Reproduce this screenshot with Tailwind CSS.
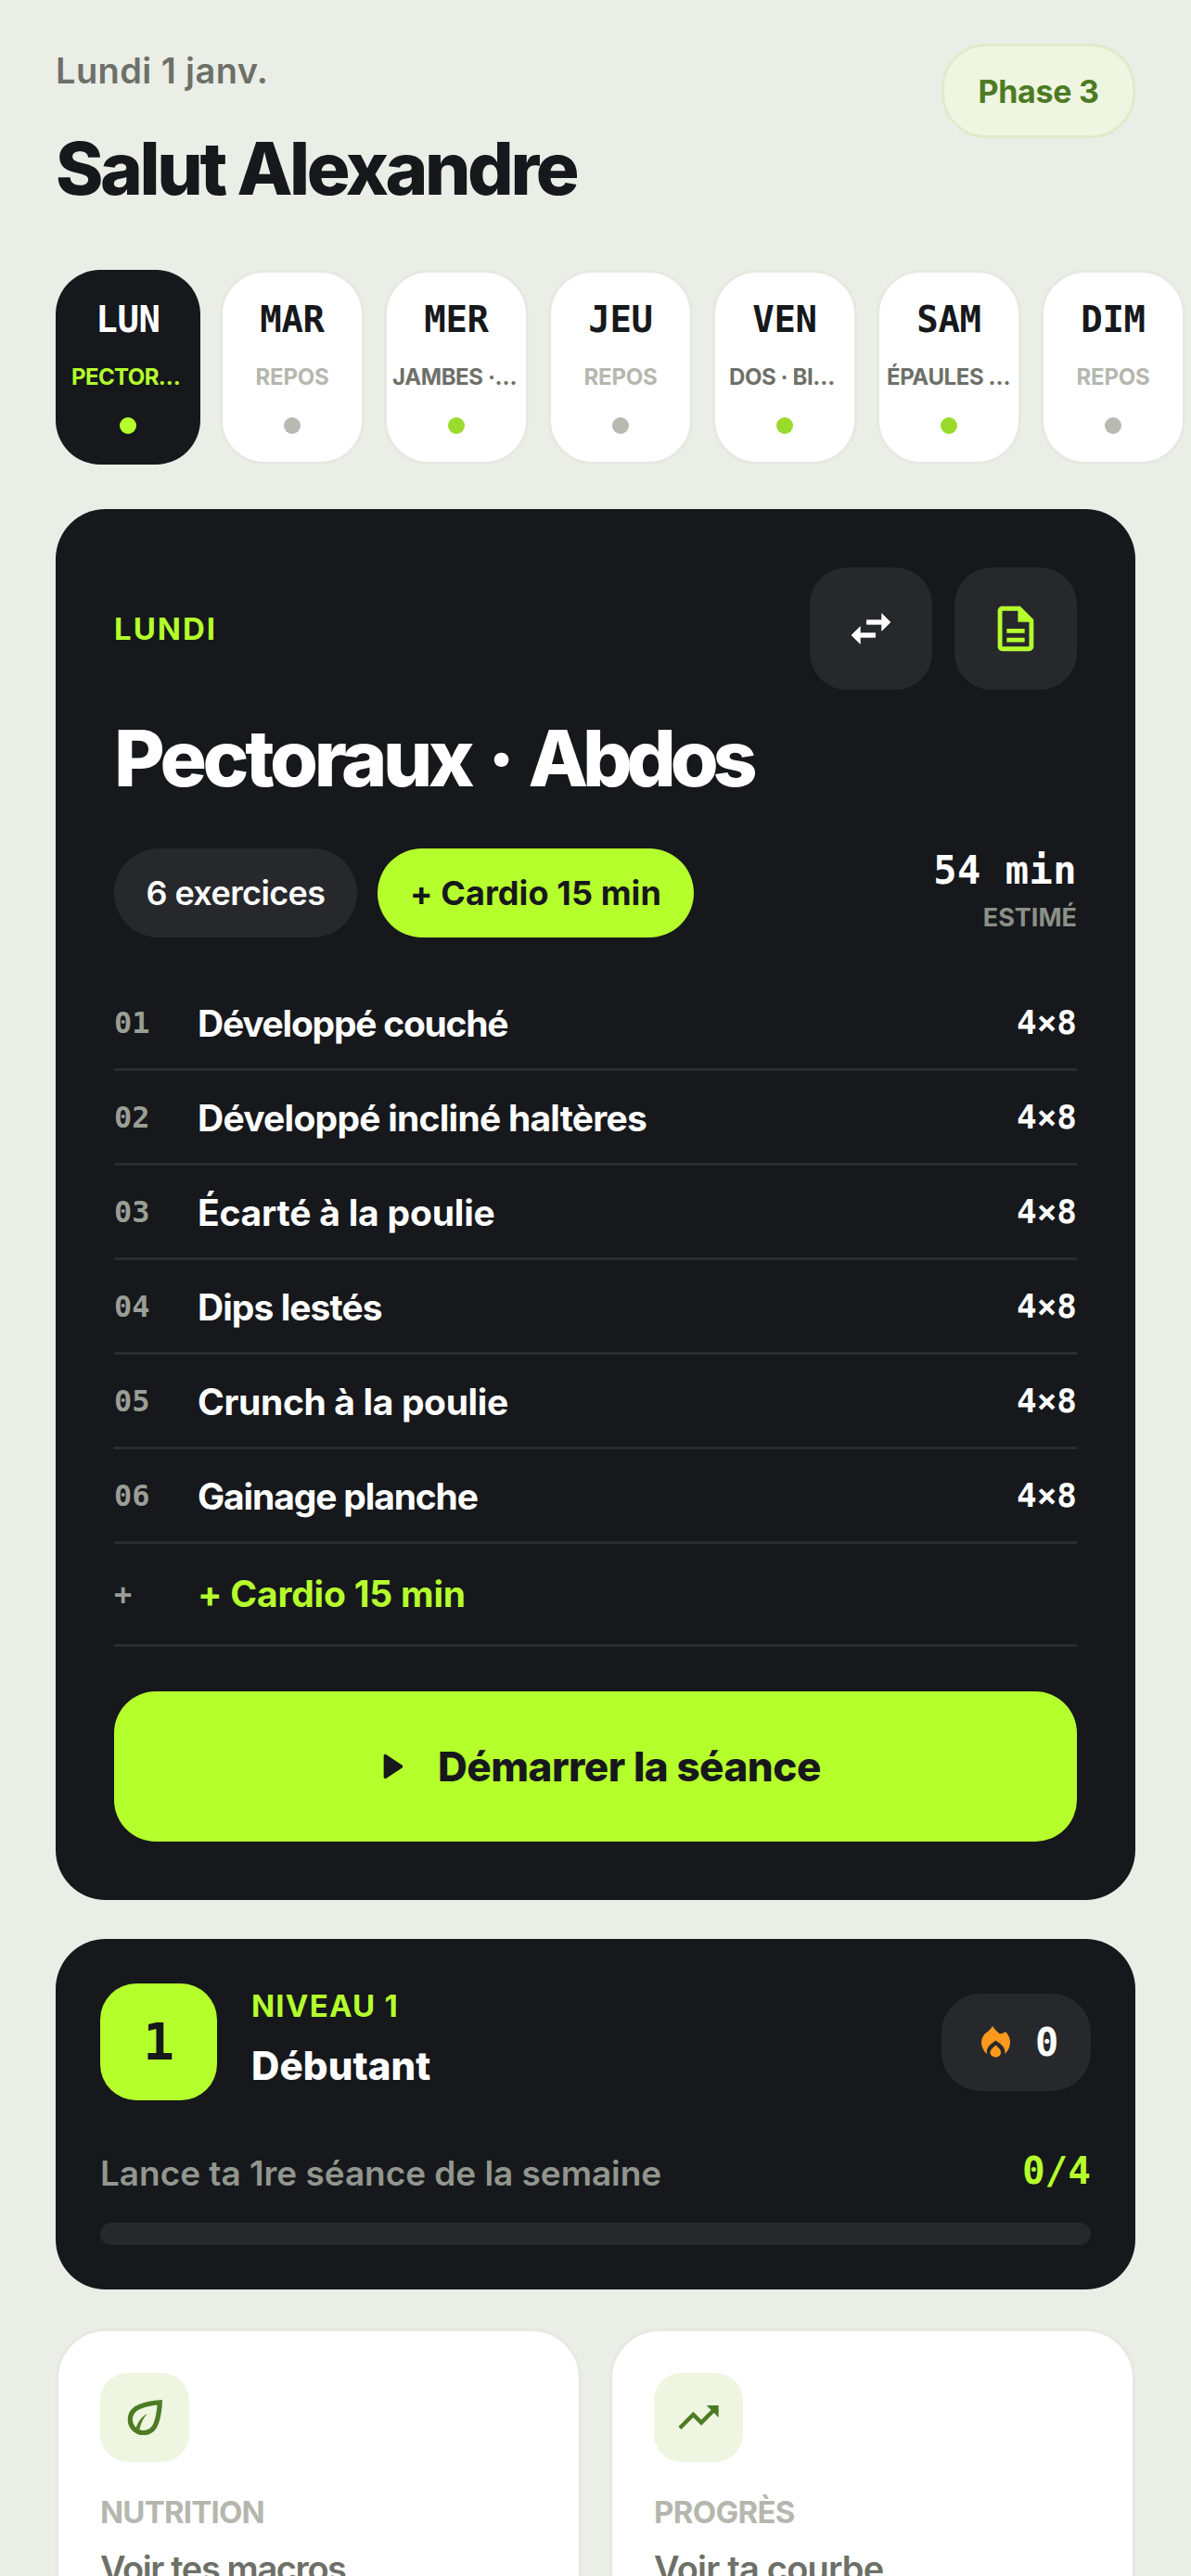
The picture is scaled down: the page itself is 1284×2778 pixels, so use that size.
<!doctype html>
<html lang="fr"><head><meta charset="utf-8"><script src="https://cdn.jsdelivr.net/npm/@tailwindcss/browser@4"></script></head>
<body class="m-0 w-[1284px] h-[2778px] overflow-hidden bg-[#ebeee7] font-['Inter',sans-serif] text-[#16181c]">
<div class="pt-[47px]">
<header class="flex justify-between px-[60px] h-[244px]">
<div>
<p class="mt-[2px] text-[38px] leading-[54px] font-semibold text-[#6d7068] tracking-[0.4px]">Lundi 1 janv.</p>
<h1 class="mt-[34px] text-[78px] leading-[90px] font-extrabold tracking-[-3.4px]">Salut Alexandre</h1>
</div>
<div class="w-[209px] h-[102px] flex items-center justify-center rounded-[48px] border-[3px] border-[#dfebcb] bg-[#eef5e0] text-[34px] font-bold tracking-[-0.3px] text-[#4c7b24]">Phase 3</div>
</header>
<div class="flex gap-[21px] pl-[60px] h-[210px] overflow-hidden">
<div class="shrink-0 w-[156px] h-[210px] rounded-[48px] bg-[#16181c] flex flex-col items-center text-white">
<span class="mt-[30px] font-['DejaVu_Sans_Mono',monospace] font-bold text-[39px] leading-[48px] tracking-[-0.3px]">LUN</span>
<span class="mt-[23px] w-[122px] text-center truncate text-[24px] leading-[30px] font-bold tracking-[-0.6px] text-[#b4ff2c]">PECTORAUX</span>
<span class="mt-[28px] w-[18px] h-[18px] rounded-full bg-[#b4ff2c]"></span>
</div>
<div class="shrink-0 w-[156px] h-[210px] rounded-[48px] bg-white border-[3px] border-[#e6e8e2] flex flex-col items-center">
<span class="mt-[27px] font-['DejaVu_Sans_Mono',monospace] font-bold text-[39px] leading-[48px] tracking-[-0.3px]">MAR</span>
<span class="mt-[23px] w-[136px] text-center truncate text-[24px] leading-[30px] font-bold tracking-[-0.2px] text-[#b5b7af]">REPOS</span>
<span class="mt-[28px] w-[18px] h-[18px] rounded-full bg-[#b8bab2]"></span>
</div>
<div class="shrink-0 w-[156px] h-[210px] rounded-[48px] bg-white border-[3px] border-[#e6e8e2] flex flex-col items-center">
<span class="mt-[27px] font-['DejaVu_Sans_Mono',monospace] font-bold text-[39px] leading-[48px] tracking-[-0.3px]">MER</span>
<span class="mt-[23px] w-[138px] text-center truncate text-[24px] leading-[30px] font-bold tracking-[-0.4px] text-[#6d7068]">JAMBES · MOLLETS</span>
<span class="mt-[28px] w-[18px] h-[18px] rounded-full bg-[#9ada2c]"></span>
</div>
<div class="shrink-0 w-[156px] h-[210px] rounded-[48px] bg-white border-[3px] border-[#e6e8e2] flex flex-col items-center">
<span class="mt-[27px] font-['DejaVu_Sans_Mono',monospace] font-bold text-[39px] leading-[48px] tracking-[-0.3px]">JEU</span>
<span class="mt-[23px] w-[136px] text-center truncate text-[24px] leading-[30px] font-bold tracking-[-0.2px] text-[#b5b7af]">REPOS</span>
<span class="mt-[28px] w-[18px] h-[18px] rounded-full bg-[#b8bab2]"></span>
</div>
<div class="shrink-0 w-[156px] h-[210px] rounded-[48px] bg-white border-[3px] border-[#e6e8e2] flex flex-col items-center">
<span class="mt-[27px] font-['DejaVu_Sans_Mono',monospace] font-bold text-[39px] leading-[48px] tracking-[-0.3px]">VEN</span>
<span class="mt-[23px] w-[120px] text-center truncate text-[24px] leading-[30px] font-bold tracking-[-0.4px] text-[#6d7068]">DOS · BICEPS</span>
<span class="mt-[28px] w-[18px] h-[18px] rounded-full bg-[#9ada2c]"></span>
</div>
<div class="shrink-0 w-[156px] h-[210px] rounded-[48px] bg-white border-[3px] border-[#e6e8e2] flex flex-col items-center">
<span class="mt-[27px] font-['DejaVu_Sans_Mono',monospace] font-bold text-[39px] leading-[48px] tracking-[-0.3px]">SAM</span>
<span class="mt-[23px] w-[134px] text-center truncate text-[24px] leading-[30px] font-bold tracking-[-0.4px] text-[#6d7068]">ÉPAULES · BRAS</span>
<span class="mt-[28px] w-[18px] h-[18px] rounded-full bg-[#9ada2c]"></span>
</div>
<div class="shrink-0 w-[156px] h-[210px] rounded-[48px] bg-white border-[3px] border-[#e6e8e2] flex flex-col items-center">
<span class="mt-[27px] font-['DejaVu_Sans_Mono',monospace] font-bold text-[39px] leading-[48px] tracking-[-0.3px]">DIM</span>
<span class="mt-[23px] w-[136px] text-center truncate text-[24px] leading-[30px] font-bold tracking-[-0.2px] text-[#b5b7af]">REPOS</span>
<span class="mt-[28px] w-[18px] h-[18px] rounded-full bg-[#b8bab2]"></span>
</div>
</div>

<main class="mx-[60px] mt-[48px] rounded-[54px] bg-[#16181c] px-[63px] pt-[63px] pb-[63px] text-white">
<div class="flex justify-between items-center">
<span class="text-[33px] font-bold tracking-[2px] text-[#b4ff2c] leading-[40px]">LUNDI</span>
<div class="flex gap-[24px]">
<div class="w-[132px] h-[132px] rounded-[40px] bg-[#27282c] flex items-center justify-center">
<svg width="56" height="56" viewBox="0 0 24 24" fill="#fff" stroke="#fff" stroke-width="0.3" stroke-linejoin="round"><path d="M6.99 11L3 15l3.99 4v-3H14v-2H6.99v-3zM21 9l-4-4v3h-7v2h7v3l4-4z"/></svg>
</div>
<div class="w-[132px] h-[132px] rounded-[40px] bg-[#27282c] flex items-center justify-center">
<svg width="58" height="58" viewBox="0 0 24 24" fill="#b5ff2d"><path d="M8 16h8v2H8zm0-4h8v2H8zm6-10H6c-1.1 0-2 .9-2 2v16c0 1.1.89 2 1.99 2H18c1.1 0 2-.9 2-2V8l-6-6zm4 18H6V4h7v5h5v11z"/></svg>
</div>
</div>
</div>
<h2 class="mt-[24px] text-[84px] leading-[100px] font-extrabold tracking-[-4.4px] [word-spacing:4.5px]">Pectoraux · <span class="tracking-[-6.2px]">Abdos</span></h2>
<div class="mt-[47px] flex items-start">
<span class="w-[262px] h-[96px] rounded-full bg-[#27282c] flex items-center justify-center text-[36px] font-semibold tracking-[-0.6px]">6 exercices</span>
<span class="ml-[22px] w-[341px] h-[96px] rounded-full bg-[#b5ff2d] text-[#16181c] flex items-center justify-center text-[36px] font-bold tracking-[0.1px]">+ Cardio 15 min</span>
<div class="ml-auto flex flex-col items-end">
<span class="font-['DejaVu_Sans_Mono',monospace] font-bold text-[42px] leading-[48px] tracking-[0.5px]">54 min</span>
<span class="mt-[9px] text-[27px] leading-[36px] font-bold text-[#8c9088]">ESTIMÉ</span>
</div>
</div>
<ul class="mt-[42px]">
<li class="h-[102px] border-b-[3px] border-[#2b2c31] flex items-center"><span class="mt-[1px] w-[90px] font-['DejaVu_Sans_Mono',monospace] font-bold text-[32px] text-[#9a9e96]">01</span><span class="mt-[3px] text-[39px] font-bold tracking-[-1.25px]">Développé couché</span><span class="ml-auto mt-[1px] font-['DejaVu_Sans_Mono',monospace] font-bold text-[36px]">4×8</span></li>
<li class="h-[102px] border-b-[3px] border-[#2b2c31] flex items-center"><span class="mt-[1px] w-[90px] font-['DejaVu_Sans_Mono',monospace] font-bold text-[32px] text-[#9a9e96]">02</span><span class="mt-[3px] text-[39px] font-bold tracking-[-0.75px]">Développé incliné haltères</span><span class="ml-auto mt-[1px] font-['DejaVu_Sans_Mono',monospace] font-bold text-[36px]">4×8</span></li>
<li class="h-[102px] border-b-[3px] border-[#2b2c31] flex items-center"><span class="mt-[1px] w-[90px] font-['DejaVu_Sans_Mono',monospace] font-bold text-[32px] text-[#9a9e96]">03</span><span class="mt-[3px] text-[39px] font-bold tracking-[-0.2px]">Écarté à la poulie</span><span class="ml-auto mt-[1px] font-['DejaVu_Sans_Mono',monospace] font-bold text-[36px]">4×8</span></li>
<li class="h-[102px] border-b-[3px] border-[#2b2c31] flex items-center"><span class="mt-[1px] w-[90px] font-['DejaVu_Sans_Mono',monospace] font-bold text-[32px] text-[#9a9e96]">04</span><span class="mt-[3px] text-[39px] font-bold tracking-[-0.95px]">Dips lestés</span><span class="ml-auto mt-[1px] font-['DejaVu_Sans_Mono',monospace] font-bold text-[36px]">4×8</span></li>
<li class="h-[102px] border-b-[3px] border-[#2b2c31] flex items-center"><span class="mt-[1px] w-[90px] font-['DejaVu_Sans_Mono',monospace] font-bold text-[32px] text-[#9a9e96]">05</span><span class="mt-[3px] text-[39px] font-bold tracking-[-0.35px]">Crunch à la poulie</span><span class="ml-auto mt-[1px] font-['DejaVu_Sans_Mono',monospace] font-bold text-[36px]">4×8</span></li>
<li class="h-[102px] border-b-[3px] border-[#2b2c31] flex items-center"><span class="mt-[1px] w-[90px] font-['DejaVu_Sans_Mono',monospace] font-bold text-[32px] text-[#9a9e96]">06</span><span class="mt-[3px] text-[39px] font-bold tracking-[-1.15px]">Gainage planche</span><span class="ml-auto mt-[1px] font-['DejaVu_Sans_Mono',monospace] font-bold text-[36px]">4×8</span></li>
<li class="h-[111px] border-b-[3px] border-[#2b2c31] flex items-center"><span class="w-[90px] font-['DejaVu_Sans_Mono',monospace] font-bold text-[32px] text-[#9a9e96]">+</span><span class="text-[39px] font-bold tracking-[-0.2px] text-[#b5ff2d]">+ Cardio 15 min</span></li>
</ul>
<button class="mt-[48px] w-full h-[162px] rounded-[45px] bg-[#b5ff2d] text-[#16181c] flex items-center justify-center gap-[29px] text-[44px] font-extrabold tracking-[-0.5px]">
<svg width="44" height="44" viewBox="0 0 24 24" fill="#16181c"><path d="M8 5.800v12.400c0 .8.900 1.300 1.500.8l9.300-6.200c.6-.4.6-1.200 0-1.600L9.500 5c-.6-.5-1.500 0-1.500.8z"/></svg>
Démarrer la séance</button>
</main>

<section class="mx-[60px] mt-[42px] rounded-[54px] bg-[#16181c] p-[48px] text-white">
<div class="flex items-center">
<div class="w-[126px] h-[126px] rounded-[39px] bg-[#b5ff2d] text-[#16181c] flex items-center justify-center font-['DejaVu_Sans_Mono',monospace] font-bold text-[56px]">1</div>
<div class="ml-[37px] self-start">
<p class="mt-[6px] text-[33px] leading-[36px] font-bold tracking-[1.2px] text-[#b5ff2d]">NIVEAU 1</p>
<p class="mt-[22px] text-[42px] leading-[50px] font-extrabold tracking-[0.1px]">Débutant</p>
</div>
<div class="ml-auto w-[161px] h-[105px] rounded-[42px] bg-[#27282c] flex items-center pl-[43px] gap-[26px]">
<svg width="32" height="34" viewBox="0 0 32 34"><path d="M12 0C14 3 17 6 20 8.500C21.500 8 24 7.500 26 6C29.500 9.500 31 13.500 31 17.500C31 26.500 24 33.500 15.500 33.500C7 33.500 0 26 0 17.500C0 14 1.500 11 3.500 8.500C5.500 7 10 4 12 0Z" fill="#fc9a1e"/><path d="M15.500 15.500C11 18.500 5.800 22 5.800 28C5.800 30 6.500 32 8 34H23.500C25 32 25.500 30 25.500 28C25.500 22 20 18.500 15.500 15.500Z" fill="#27282c"/><path d="M15.500 20.500C12.500 23 9.500 25.500 9.500 28C9.500 31.200 12.200 33.500 15.500 33.500C18.800 33.500 21 31.200 21 28C21 25.500 18.500 23 15.500 20.500Z" fill="#fc9a1e"/></svg>
<span class="font-['DejaVu_Sans_Mono',monospace] font-bold text-[42px]">0</span>
</div>
</div>
<div class="mt-[55px] flex items-center justify-between h-[48px]">
<span class="text-[37px] font-semibold tracking-[-0.05px] text-[#92968e]">Lance ta 1re séance de la semaine</span>
<span class="mt-[-5px] font-['DejaVu_Sans_Mono',monospace] font-bold text-[41px] text-[#b5ff2d]">0/4</span>
</div>
<div class="mt-[29px] h-[24px] rounded-full bg-[#27282c]"></div>
</section>

<div class="mx-[60px] mt-[42px] grid grid-cols-2 gap-[30px]">
<div class="h-[400px] rounded-[54px] bg-white border-[3px] border-[#e6e8e2] p-[45px]">
<div class="w-[96px] h-[96px] rounded-[30px] bg-[#eef5e0] flex items-center justify-center">
<svg width="50" height="50" viewBox="0 0 24 24" fill="none" stroke="#4c7b24"><path d="M19.800 4.200C19.800 4.200 10 4.700 6.500 8.200C3.800 10.900 3.800 15.200 6.500 17.900C9.200 20.600 13.500 20.600 16.200 17.900C19.500 14.500 19.800 4.200 19.800 4.200Z" stroke-width="2.500"/><path d="M7.500 17.600C8.300 14.500 10.300 11.900 13.400 10C11.300 12.400 10 14.800 9.300 18.200Z" fill="#4c7b24" stroke="none"/></svg>
</div>
<p class="mt-[36px] text-[33px] leading-[36px] font-bold text-[#b5b7af] tracking-[-0.8px]">NUTRITION</p>
<p class="mt-[19px] text-[38px] leading-[48px] font-semibold text-[#6d7068] tracking-[-1.4px]">Voir tes macros</p>
</div>
<div class="h-[400px] rounded-[54px] bg-white border-[3px] border-[#e6e8e2] p-[45px]">
<div class="w-[96px] h-[96px] rounded-[30px] bg-[#eef5e0] flex items-center justify-center">
<svg width="52" height="52" viewBox="0 0 24 24" fill="#4c7b24"><path d="M16 6l2.290 2.290-4.880 4.880-4-4L2 16.590 3.410 18l6-6 4 4 6.300-6.290L22 12V6z"/></svg>
</div>
<p class="mt-[36px] text-[33px] leading-[36px] font-bold text-[#b5b7af] tracking-[-0.7px]">PROGRÈS</p>
<p class="mt-[19px] text-[38px] leading-[48px] font-semibold text-[#6d7068] tracking-[-0.8px]">Voir ta courbe</p>
</div>
</div>
</div>
</body></html>
